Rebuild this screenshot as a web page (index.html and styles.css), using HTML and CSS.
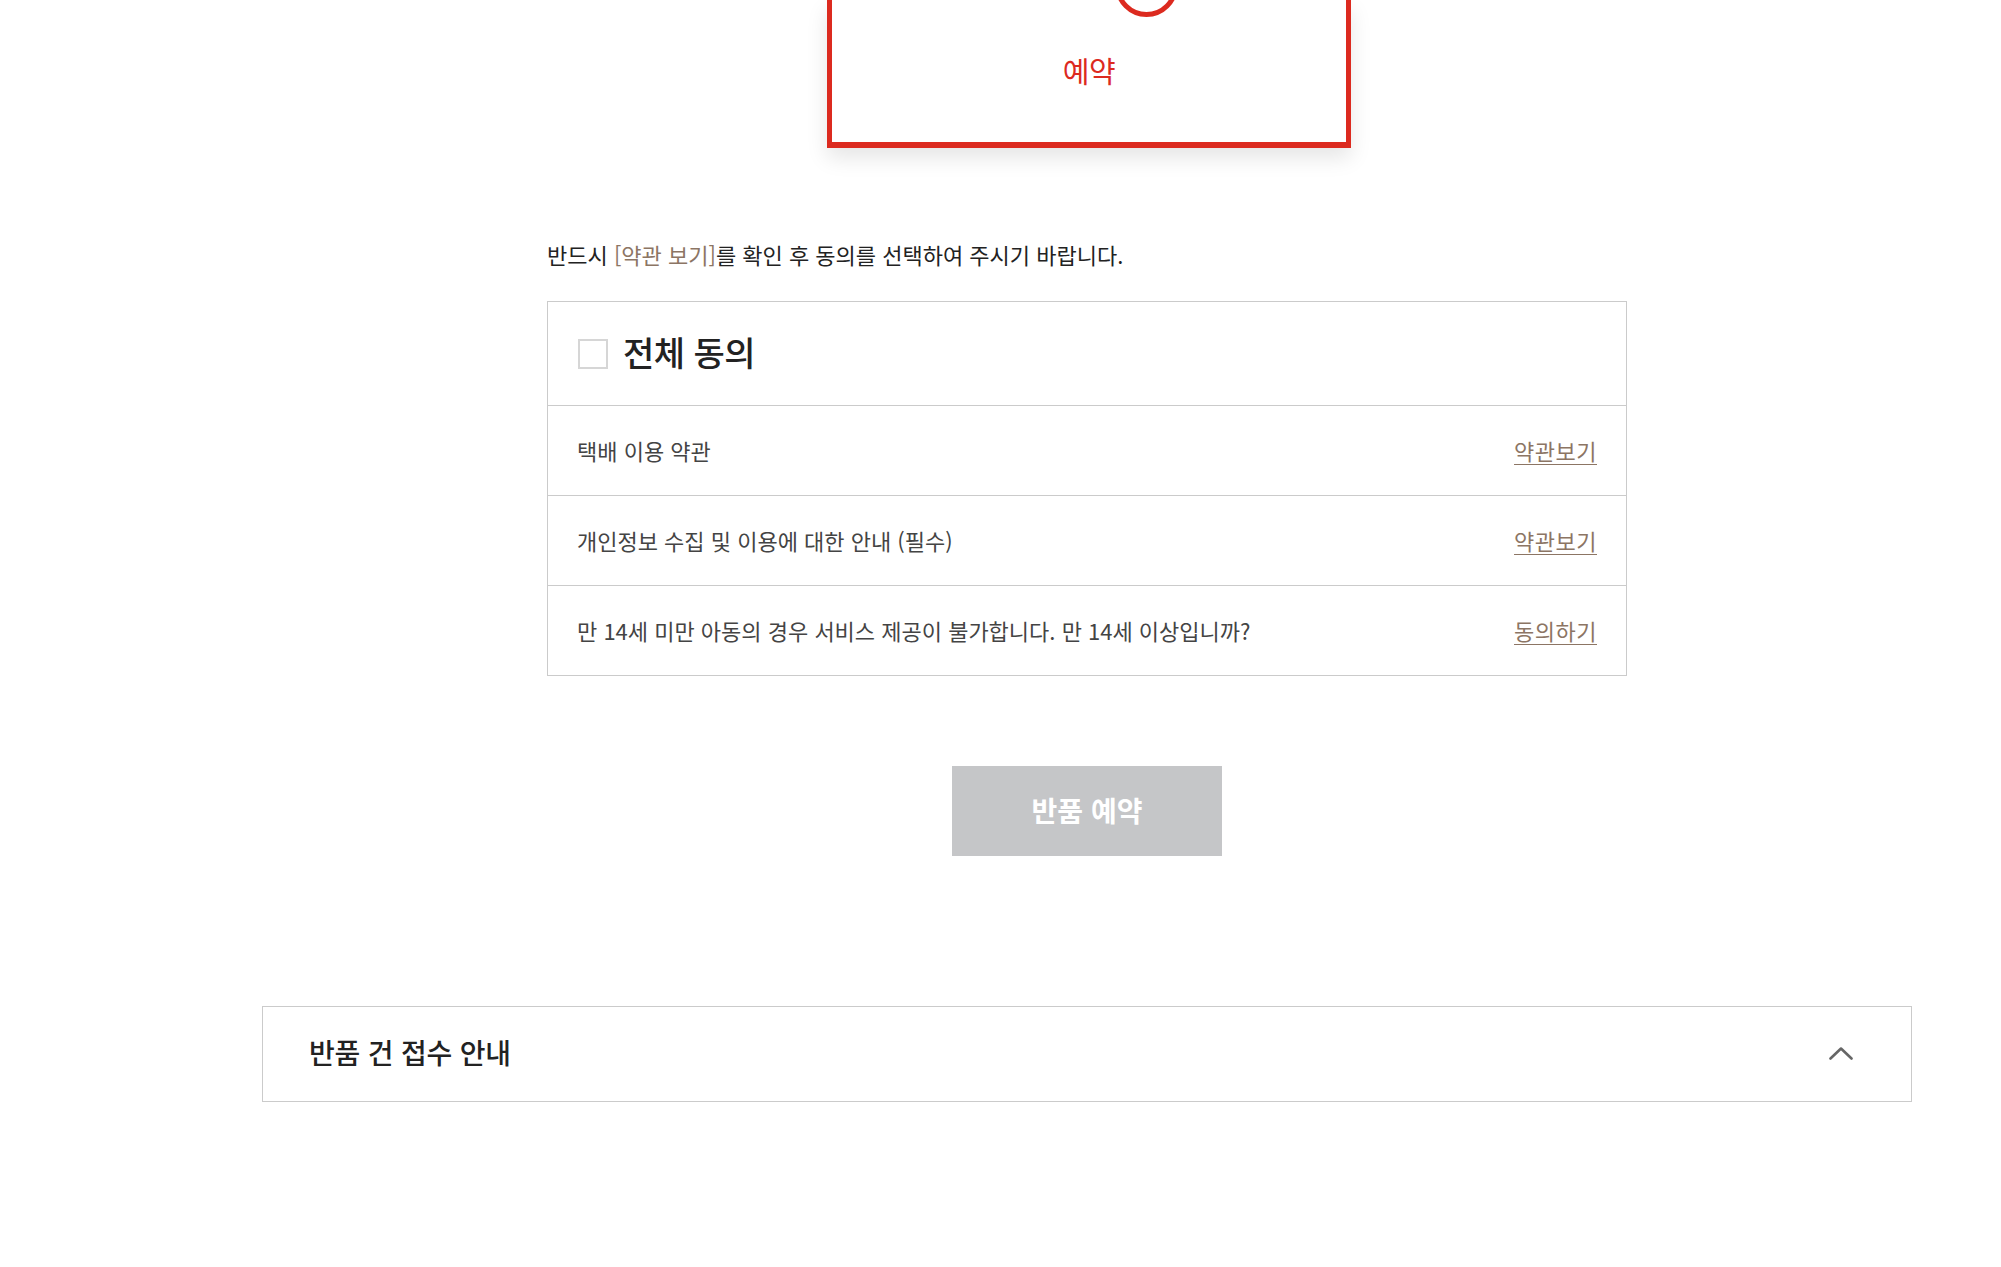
FILE: index.html
```html
<!DOCTYPE html>
<html lang="ko">
<head>
<meta charset="utf-8">
<title>반품 예약</title>
<link rel="stylesheet" href="styles.css">
</head>
<body>
<div class="page">
  <aside class="side"></aside>
  <main class="main">
    <div class="card">
      <svg class="card-icon" viewBox="0 0 514 20" width="514" height="20" aria-hidden="true">
        <circle cx="314.5" cy="-14.5" r="29" fill="none" stroke="#dc2a1f" stroke-width="5"/>
      </svg>
      <div class="card-label">예약</div>
    </div>

    <section class="agree">
      <p class="notice">반드시 <span class="brown">[약관 보기]</span>를 확인 후 동의를 선택하여 주시기 바랍니다.</p>
      <div class="terms">
        <div class="terms-head">
          <span class="check"></span>
          <span class="head-title">전체 동의</span>
        </div>
        <div class="terms-row">
          <span class="row-text">택배 이용 약관</span>
          <a class="row-link">약관보기</a>
        </div>
        <div class="terms-row">
          <span class="row-text">개인정보 수집 및 이용에 대한 안내 (필수)</span>
          <a class="row-link">약관보기</a>
        </div>
        <div class="terms-row">
          <span class="row-text">만 14세 미만 아동의 경우 서비스 제공이 불가합니다. 만 14세 이상입니까?</span>
          <a class="row-link">동의하기</a>
        </div>
      </div>
    </section>

    <div class="btn-wrap">
      <button class="btn-submit" type="button">반품 예약</button>
    </div>

    <div class="accordion">
      <span class="acc-title">반품 건 접수 안내</span>
      <svg class="chev" viewBox="0 0 24 14" width="24" height="14" aria-hidden="true">
        <path d="M1.5 12.5 L12 2.5 L22.5 12.5" fill="none" stroke="#666" stroke-width="2.6" stroke-linecap="round" stroke-linejoin="round"/>
      </svg>
    </div>
  </main>
</div>
</body>
</html>
```

FILE: styles.css
```css
* { box-sizing: border-box; }
html, body { margin: 0; padding: 0; background: #fff; }
body {
  font-family: "Noto Sans CJK KR", "Noto Sans", sans-serif;
  color: #222;
}
.page {
  display: flex;
  width: 2001px;
  min-height: 1267px;
}
.side { width: 173px; flex: none; }
.main {
  width: 1828px;
  flex: none;
  display: flex;
  flex-direction: column;
  align-items: center;
}

/* card */
.card {
  width: 524px;
  height: 148px;
  border: 5px solid #dc2a1f;
  border-top: none;
  border-bottom-width: 6px;
  background: #fff;
  box-shadow: 0 10px 20px rgba(0, 0, 0, 0.10);
  display: flex;
  flex-direction: column;
  align-items: center;
  margin-left: 4px;
}
.card-icon { display: block; width: 514px; height: 20px; flex: none; }
.card-label {
  margin-top: 30px;
  font-size: 29px;
  line-height: 40px;
  letter-spacing: -0.5px;
  color: #dc2a1f;
}

/* agreement */
.agree { width: 1080px; margin-top: 91px; }
.notice {
  margin: 0 0 32px;
  font-size: 22px;
  line-height: 30px;
  letter-spacing: 0;
  color: #222;
}
.brown { color: #8c7564; }
.terms { border: 1px solid #cbcbcb; }
.terms-head {
  height: 103px;
  display: flex;
  align-items: center;
  padding: 0 30px;
  gap: 15px;
}
.check {
  width: 30px;
  height: 30px;
  border: 2px solid #d6d6d6;
  background: #fff;
  flex: none;
}
.head-title {
  font-size: 34px;
  font-weight: 500;
  letter-spacing: -0.5px;
  color: #222;
  line-height: 40px;
  margin-top: -3px;
}
.terms-row {
  height: 90px;
  border-top: 1px solid #cbcbcb;
  display: flex;
  align-items: center;
  justify-content: space-between;
  padding: 0 29px 0 29px;
  font-size: 22px;
  line-height: 30px;
}
.row-text { color: #444; margin-top: -2px; }
.row-link {
  color: #8c7564;
  letter-spacing: 0.5px;
  text-decoration: underline;
  text-underline-offset: 4px;
  text-decoration-thickness: 1px;
  cursor: pointer;
  margin-top: -2px;
}

/* button */
.btn-wrap { margin-top: 90px; }
.btn-submit {
  width: 270px;
  height: 90px;
  border: none;
  background: #c5c6c8;
  color: #fff;
  font-family: "Noto Sans CJK KR", "Noto Sans", sans-serif;
  font-size: 28px;
  font-weight: 700;
  letter-spacing: 0;
  padding: 0 0 2px;
}

/* accordion */
.accordion {
  margin-top: 150px;
  width: 1650px;
  height: 96px;
  border: 1px solid #cbcbcb;
  display: flex;
  align-items: center;
  justify-content: space-between;
  padding: 0 58px 4px 46px;
}
.acc-title {
  font-size: 28px;
  font-weight: 500;
  letter-spacing: -0.2px;
  color: #222;
  line-height: 40px;
}
.chev { display: block; margin-top: 2px; }
```
